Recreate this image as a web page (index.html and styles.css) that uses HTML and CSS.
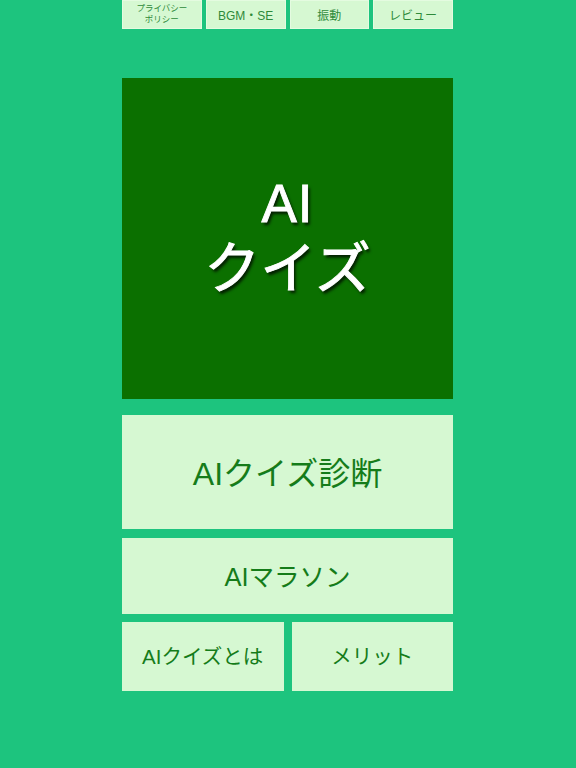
FILE: index.html
```html
<!DOCTYPE html>
<html lang="ja">
<head>
<meta charset="utf-8">
<link rel="stylesheet" href="styles.css">
</head>
<body>
<div class="page">
  <div class="toprow">
    <div class="tbtn small">
      <div class="tline">プライバシー</div>
      <div class="tline">ポリシー</div>
    </div>
    <div class="tbtn">BGM・SE</div>
    <div class="tbtn">振動</div>
    <div class="tbtn">レビュー</div>
  </div>
  <div class="hero">
    <div class="hero-line latin">AI</div>
    <div class="hero-line kana">クイズ</div>
  </div>
  <div class="btn big">AIクイズ診断</div>
  <div class="btn mid">AIマラソン</div>
  <div class="row">
    <div class="btn small-btn">AIクイズとは</div>
    <div class="btn small-btn">メリット</div>
  </div>
</div>
</body>
</html>
```
FILE: styles.css
```css
html, body {
  margin: 0;
  padding: 0;
}
body {
  background: #1dc47e;
  font-family: "Liberation Sans", "Noto Sans CJK JP", sans-serif;
  width: 576px;
  height: 768px;
  overflow: hidden;
}
.page {
  width: 331px;
  margin-left: 122px;
  display: flex;
  flex-direction: column;
}
.toprow {
  display: flex;
  gap: 4px;
  height: 29px;
}
.tbtn {
  flex: 1;
  background: #d6f8d2;
  color: #2e8a3a;
  font-size: 12px;
  display: flex;
  flex-direction: column;
  align-items: center;
  justify-content: center;
  text-align: center;
  box-shadow: inset 0 0 0 1px #e4fbe0;
}
.tbtn.small {
  font-size: 8.5px;
  padding-bottom: 1px;
}
.tline {
  line-height: 11.5px;
  height: 11.5px;
}
.hero {
  margin-top: 49px;
  height: 321px;
  background: #0b7000;
  display: flex;
  flex-direction: column;
  align-items: center;
  justify-content: center;
  padding-bottom: 6px;
  box-sizing: border-box;
}
.hero-line {
  color: #ffffff;
  line-height: 65px;
  height: 65px;
  text-align: center;
  text-shadow: 2px 3px 3px rgba(0, 0, 0, 0.75);
  -webkit-text-stroke: 0.9px #ffffff;
}
.hero-line.latin {
  font-size: 53px;
  letter-spacing: 1px;
}
.hero-line.kana {
  font-size: 56px;
}
.btn {
  background: #d6f8d2;
  color: #157c1a;
  display: flex;
  align-items: center;
  justify-content: center;
  box-sizing: border-box;
}
.big {
  margin-top: 16px;
  height: 114px;
  font-size: 32px;
  padding-bottom: 2px;
}
.mid {
  margin-top: 9px;
  height: 76px;
  font-size: 25.5px;
  padding-bottom: 3px;
}
.row {
  margin-top: 8px;
  display: flex;
  gap: 8px;
  height: 69px;
}
.small-btn {
  flex: 1;
  font-size: 20.5px;
  padding-bottom: 3px;
}
```
